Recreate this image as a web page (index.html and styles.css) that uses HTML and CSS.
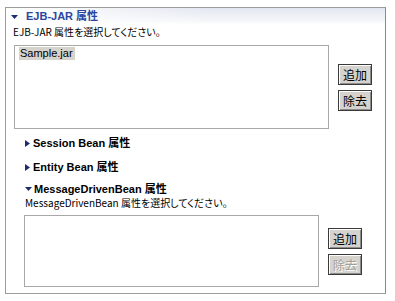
FILE: index.html
```html
<!doctype html>
<html>
  <head>
    <meta charset="utf-8" />
    <title>EJB-JAR 属性</title>
    <meta name="viewport" content="width=device-width" />
    <link rel="stylesheet" href="styles.css">
  </head>

  <body>
    <div class="section">
      <div class="section-head">
        <svg class="twisty open" width="7" height="4" viewBox="0 0 7 4"><polygon points="0,0 7,0 3.5,4" /></svg>
        <span class="section-title">EJB-JAR 属性</span>
      </div>

      <div class="section-body">
        <p class="desc">EJB-JAR 属性を選択してください。</p>
        <div class="list-row tall">
          <div class="list">
            <div class="item selected">Sample.jar</div>
          </div>
          <div class="buttons">
            <button class="btn">追加</button>
            <button class="btn">除去</button>
          </div>
        </div>

        <div class="sub">
          <div class="sub-head first">
            <svg class="twisty" width="5" height="7" viewBox="0 0 5 7"><polygon points="0,0 5,3.5 0,7" /></svg>
            <span>Session Bean 属性</span>
          </div>
          <div class="sub-head second">
            <svg class="twisty" width="5" height="7" viewBox="0 0 5 7"><polygon points="0,0 5,3.5 0,7" /></svg>
            <span>Entity Bean 属性</span>
          </div>
          <div class="sub-head third">
            <svg class="twisty open" width="7" height="4" viewBox="0 0 7 4"><polygon points="0,0 7,0 3.5,4" /></svg>
            <span>MessageDrivenBean 属性</span>
          </div>
          <p class="desc">MessageDrivenBean 属性を選択してください。</p>
          <div class="list-row short">
            <div class="list"></div>
            <div class="buttons">
              <button class="btn">追加</button>
              <button class="btn" disabled>除去</button>
            </div>
          </div>
        </div>
      </div>
    </div>
  </body>
</html>
```

FILE: styles.css
```css
body {
  margin: 0;
  padding: 7px 0 0 5px;
  background: #fff;
  font-family: "Liberation Sans", "Noto Sans CJK JP", sans-serif;
  font-size: 11px;
  color: #000;
}
.section {
  width: 381px;
  box-sizing: border-box;
  border: 1px solid #9c9c9c;
  border-right-color: #8a8a8a;
}
.section-head {
  height: 17px;
  display: flex;
  align-items: center;
  padding-left: 5px;
  background:
    linear-gradient(to right, #fff 0%, rgba(255, 255, 255, 0) 55%),
    linear-gradient(to bottom, #e2e6f0, #f3f5f9 70%, #fff);
}
.twisty {
  flex: none;
  fill: #1b2f6e;
}
.section-head .twisty {
  margin-right: 8px;
}
.section-title {
  font-weight: bold;
  color: #2a45a0;
  line-height: 17px;
}
.section-body {
  padding: 0 13px 6px 8px;
}
.desc {
  margin: 0 0 0 -1px;
  font-family: "Noto Sans CJK JP", sans-serif;
  font-feature-settings: "palt";
  font-size: 10px;
  line-height: 13px;
}
.list-row {
  display: flex;
  align-items: center;
  gap: 9px;
  margin-top: 7px;
}
.list {
  flex: 1;
  box-sizing: border-box;
  border: 1px solid #a8a8a8;
  background: #fff;
  padding: 1px 0 0 4px;
}
.tall .list {
  height: 84px;
}
.short .list {
  height: 72px;
}
.item {
  display: inline-block;
  padding: 0 2px 0 1px;
  line-height: 13px;
}
.item.selected {
  background: #d6d3cd;
}
.buttons {
  display: flex;
  flex-direction: column;
  gap: 5px;
}
.btn {
  width: 34px;
  height: 21px;
  padding: 0;
  border: 1px solid #3a3a3a;
  background: #d6d3ce;
  box-shadow: inset 1px 1px #fff, inset -1px -1px #8c8c8c;
  font-family: "Noto Sans CJK JP", sans-serif;
  font-size: 12px;
  line-height: 17px;
  color: #000;
}
.btn:disabled {
  color: #a09e99;
  text-shadow: 1px 1px #fff;
}
.sub {
  margin: 7px 10px 0;
}
.sub .list-row {
  margin-top: 6px;
}
.sub .desc {
  margin-left: 1px;
}
.sub-head {
  display: flex;
  align-items: center;
  height: 14px;
  line-height: 14px;
  font-weight: bold;
  padding-left: 1px;
}
.sub-head .twisty {
  margin-right: 3px;
}
.sub-head .twisty.open {
  margin-right: 2px;
}
.sub-head.second {
  margin-top: 10px;
}
.sub-head.third {
  margin-top: 8px;
}
```
